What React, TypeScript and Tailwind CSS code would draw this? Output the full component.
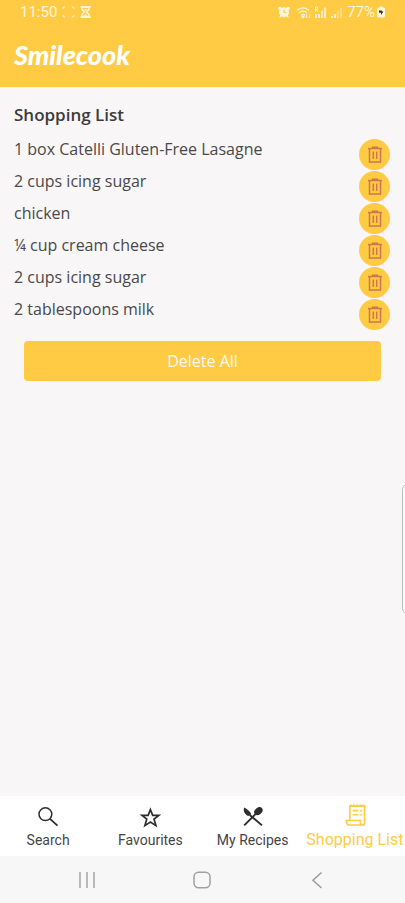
import React from "react";

const items = [
  "1 box Catelli Gluten-Free Lasagne",
  "2 cups icing sugar",
  "chicken",
  "¼ cup cream cheese",
  "2 cups icing sugar",
  "2 tablespoons milk",
];

function TrashIcon() {
  return (
    <svg width="16" height="18" viewBox="0 0 16 18" fill="none" stroke="#cf7551" strokeWidth="1.5" aria-hidden="true">
      <path d="M1 2.5H15M5.5 2.2V1.2H10.5V2.2M2.5 3V16H13.5V3M6.3 5.5V13.1M9.7 5.5V13.1" />
    </svg>
  );
}

function StatusBar() {
  return (
    <div className="flex h-6 items-center justify-between px-5 font-['Roboto',sans-serif] text-[15px] leading-4 text-[#fff6dc]">
      <div className="flex items-center">
        <span className="w-9">11:50</span>
        <svg className="ml-1.5" width="14" height="14" viewBox="0 0 14 14" fill="none" stroke="currentColor" strokeWidth="1" aria-hidden="true">
          <path d="M1 4V3Q1 2 2 2H3M10 2H11Q12 2 12 3V4M12 10V11Q12 12 11 12H10M3 12H2Q1 12 1 11V10" />
        </svg>
        <svg className="ml-1" width="11" height="12" viewBox="0 0 11 12" fill="none" stroke="currentColor" aria-hidden="true">
          <path d="M0.5 1H10.5M0.5 11H10.5" strokeWidth="1.8" />
          <path d="M2 1V3.5L4.5 6L2 8.5V11M9 1V3.5L6.5 6L9 8.5V11" strokeWidth="1.4" />
          <path d="M4 3.5H7L5.5 5Z M4 9.5H7L5.5 8Z" fill="currentColor" strokeWidth="0.5" />
        </svg>
      </div>
      <div className="flex items-center">
        <svg width="12" height="12" viewBox="0 0 12 12" fill="currentColor" aria-hidden="true">
          <circle cx="6" cy="6.2" r="5" />
          <circle cx="1.9" cy="2.4" r="1.7" />
          <circle cx="10.1" cy="2.4" r="1.7" />
          <path d="M2.5 9L1.2 11.3H3.4ZM9.5 9L10.8 11.3H8.6Z" />
          <path d="M6 3.6V6.5H8.3" fill="none" stroke="#ffcb45" strokeWidth="1.1" />
        </svg>
        <svg className="ml-1.5" width="16" height="13" viewBox="0 0 16 13" fill="none" stroke="currentColor" strokeWidth="1.2" aria-hidden="true">
          <path d="M1 4.2Q7 -0.6 13 4.2M3 6.8Q7 3.6 11 6.8M5 9.2Q7 7.7 9 9.2" />
          <path d="M6 10.3H8L7 11.7Z" fill="currentColor" />
          <path d="M10.5 8V12M9.5 11L10.5 12L11.5 11M13.8 8V12" strokeWidth="0.8" />
        </svg>
        <svg className="ml-0.5" width="13" height="13" viewBox="0 0 13 13" fill="none" stroke="currentColor" aria-hidden="true">
          <path d="M1.5 6V1H3.4V3.5H1.5M2.6 3.5L4 6" strokeWidth="1" />
          <path d="M2 8V12M5 8V12M8 4.5V12M11 1.5V12" strokeWidth="1.6" />
        </svg>
        <svg className="ml-1" width="12" height="13" viewBox="0 0 12 13" fill="none" stroke="currentColor" strokeWidth="1.6" aria-hidden="true">
          <path d="M1 10V12M4 8V12" />
          <path d="M7 4.5V12M10 1.5V12" opacity="0.45" />
        </svg>
        <span className="ml-1">77%</span>
        <svg className="ml-0.5" width="8" height="12" viewBox="0 0 8 12" aria-hidden="true">
          <path d="M2.5 0.5H5.5V1.5H6.5Q8 1.5 8 3V10Q8 11.5 6.5 11.5H1.5Q0 11.5 0 10V3Q0 1.5 1.5 1.5H2.5Z" fill="currentColor" />
          <path d="M2 4.5H5V5.5H6.5L4 9V6.8H2Z" fill="#38321f" />
        </svg>
      </div>
    </div>
  );
}

function SearchIcon() {
  return (
    <svg width="22" height="22" viewBox="0 0 22 22" fill="none" stroke="#2d2d2d" aria-hidden="true">
      <circle cx="8.4" cy="8.2" r="6.4" strokeWidth="1.5" />
      <path d="M13 12.8L20.5 19.6" strokeWidth="1.8" />
    </svg>
  );
}

function StarIcon() {
  return (
    <svg width="22" height="22" viewBox="0 0 22 22" fill="none" stroke="#2d2d2d" strokeWidth="1.7" aria-hidden="true">
      <path d="M11.4 3.6L13.7 9.3H19.8L15 13.1L16.9 19.6L11.4 16L5.9 19.6L7.8 13.1L3 9.3H9.1Z" />
    </svg>
  );
}

function UtensilsIcon() {
  return (
    <svg width="22" height="22" viewBox="0 0 22 22" aria-hidden="true">
      <path d="M2.2 1.5C1 4.5 2.5 7.5 5 9.5L7.3 10.1L9.2 8.2C8.8 6 5.6 3.5 2.2 1.5Z" fill="#2d2d2d" />
      <path d="M8 9.2L20 19.4M2.2 19.4L14 7.6" stroke="#2d2d2d" strokeWidth="1.9" fill="none" />
      <ellipse cx="16.4" cy="5.2" rx="4.6" ry="3.4" transform="rotate(-38 16.4 5.2)" fill="#2d2d2d" />
    </svg>
  );
}

function ReceiptIcon() {
  return (
    <svg width="22" height="22" viewBox="0 0 22 22" fill="none" stroke="#ffcb45" aria-hidden="true">
      <path d="M5.8 15.5V2.2H20.6V19Q20.6 21 18.6 21H4.6Q2.4 21 2.4 16.5H16.2Q16.2 21 18.6 21" strokeWidth="1.7" />
      <path d="M5.8 1.4H20.6" strokeWidth="2" strokeDasharray="2 1.2" />
      <path d="M8.6 6.6H14.4M16.2 6.6H18.2M8.6 10.7H14.4M16.2 10.7H18.2" strokeWidth="1.6" />
    </svg>
  );
}

const tabs = [
  { label: "Search", icon: <SearchIcon />, active: false },
  { label: "Favourites", icon: <StarIcon />, active: false },
  { label: "My Recipes", icon: <UtensilsIcon />, active: false },
  { label: "Shopping List", icon: <ReceiptIcon />, active: true },
];

export default function App() {
  return (
    <div className="relative flex min-h-screen flex-col overflow-hidden bg-[#f8f6f7] font-['Open_Sans',sans-serif] text-[#4a494a]">
      <header className="bg-[#ffcb45] pb-4">
        <StatusBar />
        <div className="mt-[15px] px-3.5 font-['Lato',sans-serif] text-[27px] font-black italic leading-8 text-white">
          Smilecook
        </div>
      </header>

      <main className="flex-1 px-3.5 pt-4">
        <h1 className="text-[17px] font-semibold leading-6 text-[#3c3b3c]">Shopping List</h1>
        <ul className="mt-2.5 pr-px">
          {items.map((item, i) => (
            <li key={i} className="flex h-8 items-start justify-between">
              <span className="text-[16px] leading-6">{item}</span>
              <button
                type="button"
                aria-label={`Delete ${item}`}
                className="mt-0.5 flex size-[31px] shrink-0 items-center justify-center rounded-full bg-[#ffcb45]"
              >
                <TrashIcon />
              </button>
            </li>
          ))}
        </ul>
        <div className="px-2.5 pt-3">
          <button type="button" className="h-10 w-full rounded-[4px] bg-[#ffcb45] text-[16px] leading-6 text-[#fffaf0]">
            Delete All
          </button>
        </div>
      </main>

      <div className="absolute -right-2 top-[484px] h-[130px] w-[11px] rounded-md border border-[#bdbbbc] bg-[#fafafa]" />

      <nav className="bg-white font-['Roboto',sans-serif]">
        <div className="-mr-px -ml-[3px] grid h-[60px] grid-cols-4">
          {tabs.map((tab) => (
            <a
              key={tab.label}
              href="#"
              aria-current={tab.active ? "page" : undefined}
              className={
                tab.active
                  ? "flex flex-col items-center gap-0.5 whitespace-nowrap pt-2 text-[16px] leading-6 text-[#ffcb45]"
                  : "flex flex-col items-center whitespace-nowrap pt-2.5 text-[14px] leading-6 text-[#454545]"
              }
            >
              {tab.icon}
              <span>{tab.label}</span>
            </a>
          ))}
        </div>
      </nav>

      <div className="grid h-[47px] grid-cols-[1fr_auto_1fr] items-center bg-[#f7f7f7] pr-20 pl-[78px]">
        <button type="button" aria-label="Recent apps" className="justify-self-start">
          <svg width="18" height="18" viewBox="0 0 18 18" stroke="#a9a9a9" strokeWidth="1.6" aria-hidden="true">
            <path d="M2 1V17M9 1V17M16 1V17" />
          </svg>
        </button>
        <button type="button" aria-label="Home">
          <svg width="18" height="18" viewBox="0 0 18 18" fill="none" stroke="#a0a0a0" strokeWidth="1.5" aria-hidden="true">
            <rect x="1" y="1.2" width="16" height="15.6" rx="4.5" />
          </svg>
        </button>
        <button type="button" aria-label="Back" className="justify-self-end">
          <svg width="18" height="18" viewBox="0 0 18 18" fill="none" stroke="#9a9a9a" strokeWidth="1.5" aria-hidden="true">
            <path d="M14.5 1.5L6 9.3L14.5 17" />
          </svg>
        </button>
      </div>
    </div>
  );
}
